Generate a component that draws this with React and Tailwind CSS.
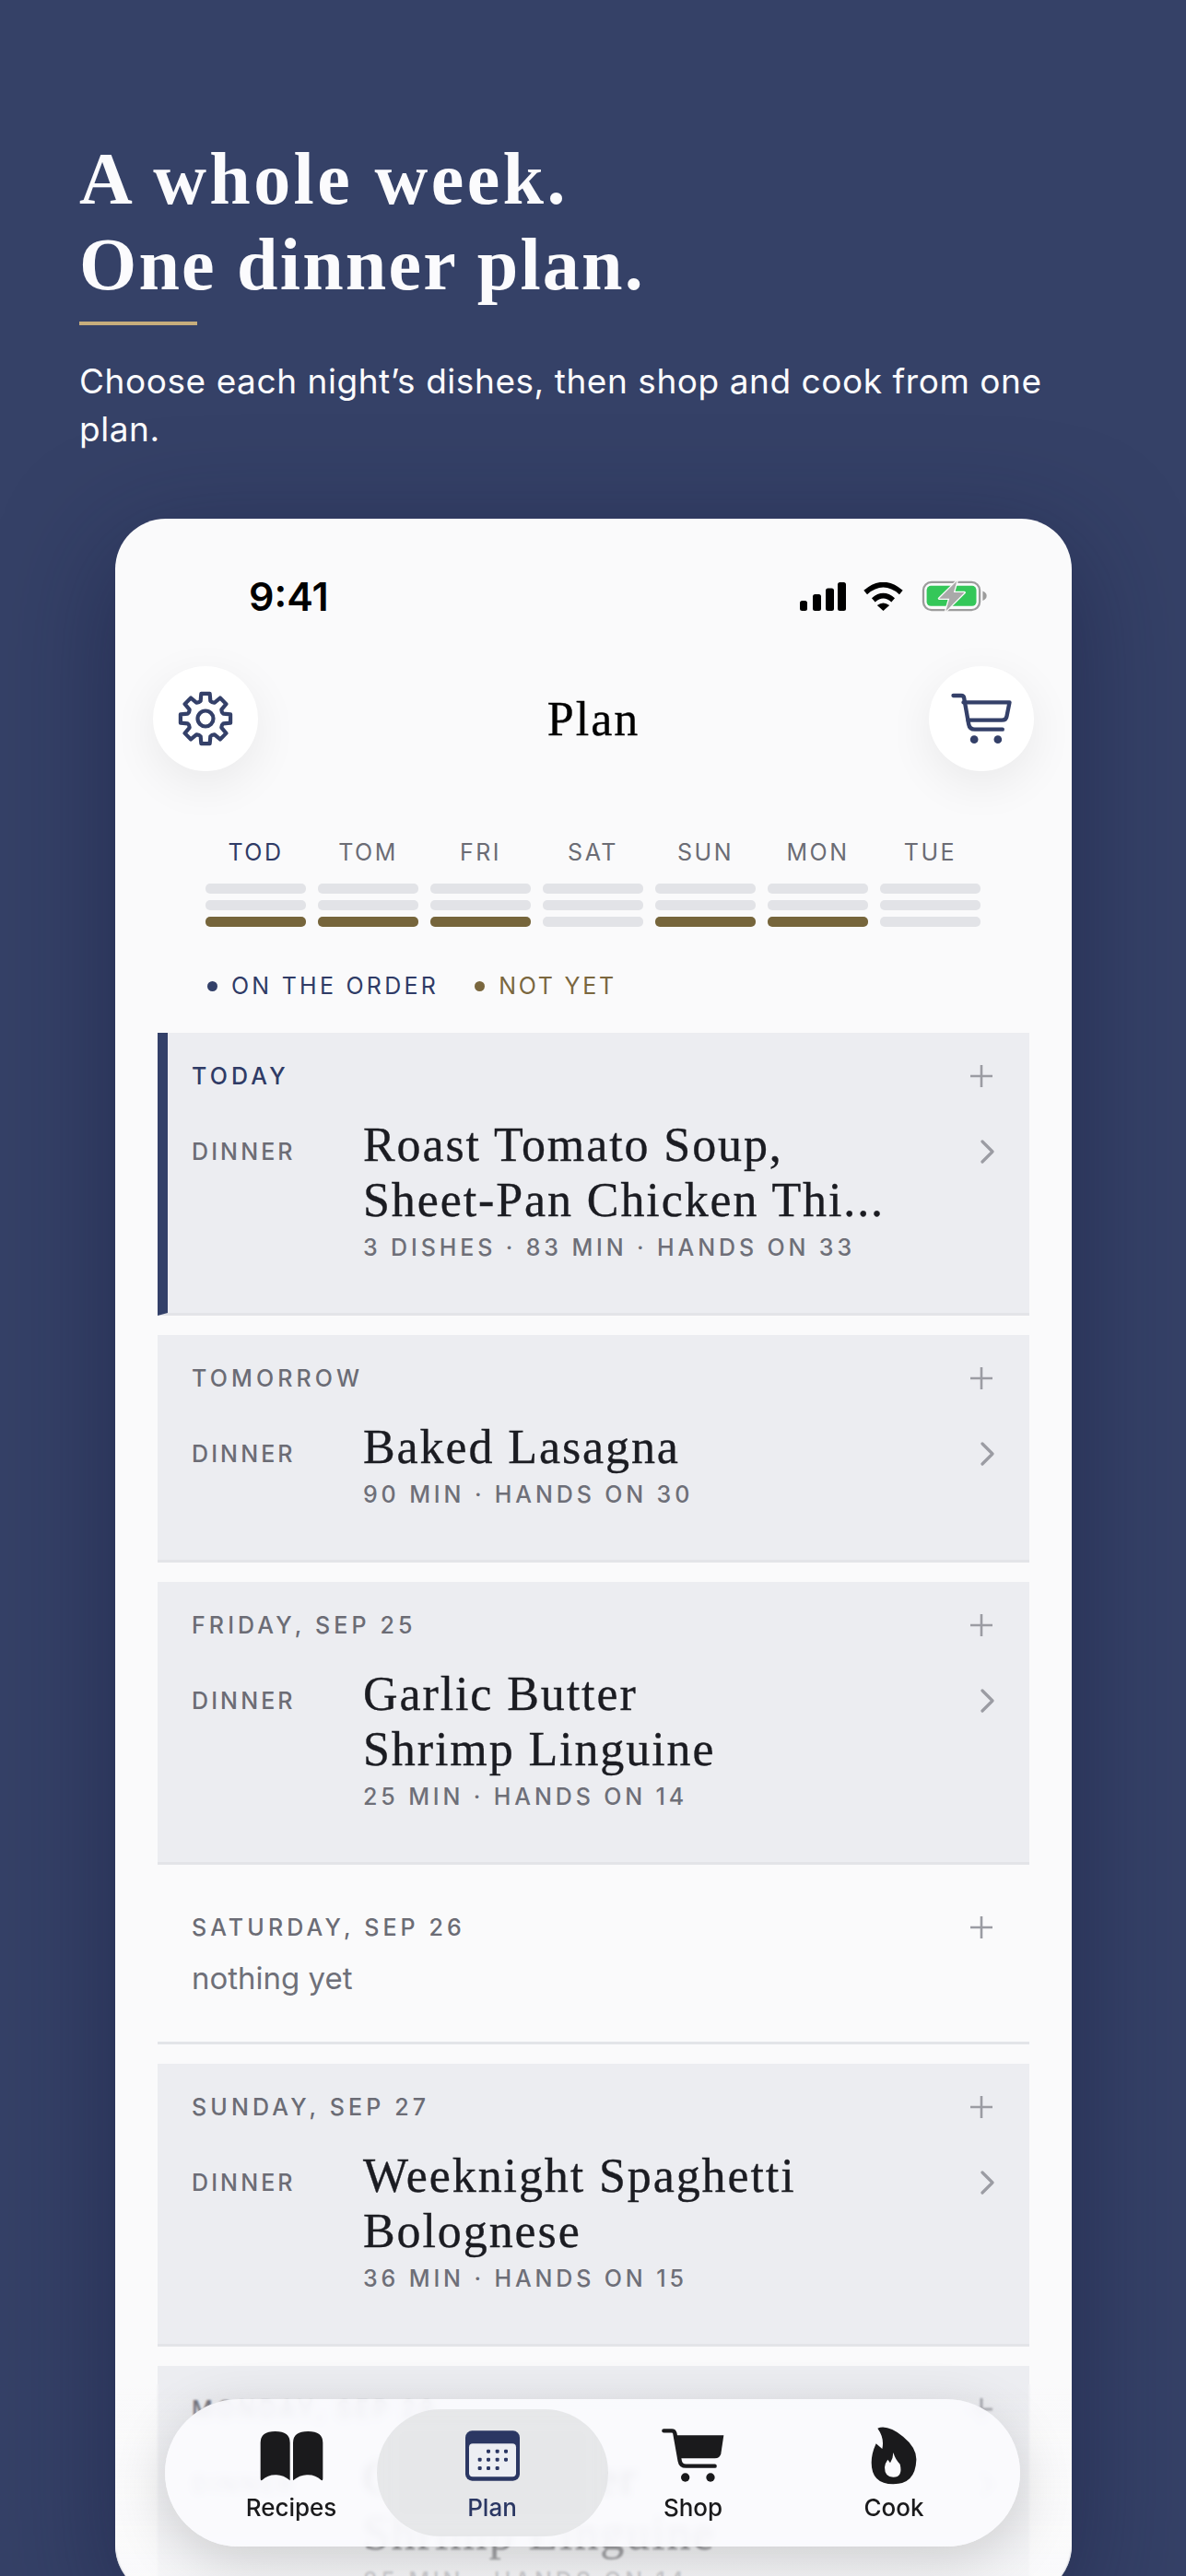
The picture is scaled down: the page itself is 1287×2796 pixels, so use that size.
import React from "react";

const serif = "font-['Liberation_Serif',serif] [-webkit-text-stroke:0.35px]";

function gearPath() {
  const cx = 30, cy = 30, n = 8;
  let d = "";
  for (let i = 0; i < n; i++) {
    const a = (i * 2 * Math.PI) / n - Math.PI / 2;
    const p = (r, da) => `${(cx + r * Math.cos(a + da)).toFixed(2)} ${(cy + r * Math.sin(a + da)).toFixed(2)}`;
    d += `${i === 0 ? "M" : "L"}${p(20, -0.27)} L${p(27.5, -0.17)} L${p(27.5, 0.17)} L${p(20, 0.27)} `;
    d += `Q${p(18.5, Math.PI / 8)} ${p(20, Math.PI / 4 - 0.27)} `;
  }
  return d + "Z";
}

const Gear = () => (
  <svg width="60" height="60" viewBox="0 0 60 60" fill="none" stroke="#344069" strokeWidth="4.2" strokeLinejoin="round">
    <path d={gearPath()} />
    <circle cx="30" cy="30" r="8.5" />
  </svg>
);

const HeaderCart = () => (
  <svg width="67" height="60" viewBox="570 450 200 180" fill="none" stroke="#344069" strokeWidth="13" strokeLinecap="round" strokeLinejoin="round">
    <path d="M580 465H606Q614 465 615 473L630 558Q633 575 650 575H740" />
    <path d="M613 487H763L754 532Q752 545 738 545H628" />
    <circle cx="648" cy="608" r="13" fill="#344069" stroke="none" />
    <circle cx="725" cy="608" r="13" fill="#344069" stroke="none" />
  </svg>
);

const Signal = () => (
  <svg width="50" height="31" viewBox="0 0 50 31" fill="#000">
    <rect x="0" y="20" width="8" height="11" rx="2.5" />
    <rect x="14" y="13" width="9" height="18" rx="2.5" />
    <rect x="28" y="6.5" width="9" height="24.5" rx="2.5" />
    <rect x="41" y="0" width="9" height="31" rx="2.5" />
  </svg>
);

const Wifi = () => (
  <svg width="43" height="31" viewBox="295 95 128 93" fill="none" stroke="#000" strokeWidth="17">
    <path d="M301 128Q359 78 417 128" />
    <path d="M327 153Q359 125 391 153" />
    <path d="M339 170Q359 155 379 170L359 188Z" fill="#000" stroke="none" />
  </svg>
);

const Battery = () => (
  <svg width="71" height="36" viewBox="480 88 216 108" fill="none">
    <rect x="486" y="96" width="186" height="92" rx="27" stroke="#9c9c9c" strokeWidth="7" />
    <rect x="497" y="108" width="164" height="67" rx="14" fill="#34c759" />
    <path d="M682 125Q695 130 695 141Q695 152 682 157Z" fill="#9c9c9c" />
    <path d="M597 92L538 150H572L560 192L622 130H586Z" fill="#a9a9a9" stroke="#fafafa" strokeWidth="8" paintOrder="stroke" strokeLinejoin="round" />
  </svg>
);

const Plus = () => (
  <svg width="24" height="24" viewBox="0 0 24 24" fill="none" stroke="#9b9ca3" strokeWidth="2.6">
    <path d="M12 0V24M0 12H24" />
  </svg>
);

const Chevron = () => (
  <svg width="15" height="26" viewBox="0 0 15 26" fill="none" stroke="#9b9ca3" strokeWidth="3.2" strokeLinecap="round" strokeLinejoin="round">
    <path d="M2 2L13 13L2 24" />
  </svg>
);

const Book = () => (
  <svg width="69" height="55" viewBox="545 235 207 165" fill="#1a1a1c">
    <path d="M547 275Q547 238 595 238Q643 238 643 275V398Q620 378 595 380Q570 380 552 397Q547 400 547 392Z" />
    <path d="M750 275Q750 238 702 238Q653 238 653 275V398Q677 378 702 380Q727 380 745 397Q750 400 750 392Z" />
  </svg>
);

const Calendar = () => (
  <svg width="59" height="55" viewBox="738 40 177 163">
    <rect x="738" y="40" width="177" height="163" rx="22" fill="#2b3763" />
    <rect x="750" y="82" width="153" height="108" rx="12" fill="#eceef3" />
    <g fill="#2b3763">
      {[[813, 107], [842, 107], [870, 107], [785, 134], [813, 134], [842, 134], [870, 134], [785, 162], [813, 162], [842, 162]].map(([x, y]) => (
        <rect key={`${x}-${y}`} x={x - 6} y={y - 6} width="12" height="12" rx="3.5" />
      ))}
    </g>
  </svg>
);

const NavCart = () => (
  <svg width="70" height="60" viewBox="50 40 210 180">
    <path d="M60 50H86Q94 50 96 58L112 148Q115 165 132 165H226" fill="none" stroke="#1a1a1c" strokeWidth="13" strokeLinecap="round" strokeLinejoin="round" />
    <path d="M102 65H255L246 125Q243 140 226 140H114Z" fill="#1a1a1c" />
    <circle cx="130" cy="202" r="14" fill="#1a1a1c" />
    <circle cx="212" cy="202" r="14" fill="#1a1a1c" />
  </svg>
);

const Flame = () => (
  <svg width="50" height="64" viewBox="735 20 150 192">
    <path d="M757 28Q790 15 840 55Q885 92 883 132Q880 210 808 210Q737 210 737 140Q737 110 752 78L772 95Q780 60 757 28Z" fill="#1a1a1c" />
    <path d="M808 107Q815 130 830 145Q840 187 808 187Q780 187 780 155Q782 140 790 130L798 141Q808 125 808 107Z" fill="#fbfbfe" />
  </svg>
);

const days = [
  ["TOD", true, true],
  ["TOM", false, true],
  ["FRI", false, true],
  ["SAT", false, false],
  ["SUN", false, true],
  ["MON", false, true],
  ["TUE", false, false],
];

const labelCls = "text-[25px] leading-[30px] font-medium tracking-[0.165em]";

function Row({ label, lines, meta, accent, empty }) {
  return (
    <div
      className={`border-b-[3px] border-[#e3e4e8] pr-[40px] ${accent ? "border-l-[11px] border-l-[#334069] pl-[26px]" : "pl-[37px]"} ${empty ? "pb-[47px]" : "bg-[#ecedf1] pb-[56px]"} pt-[32px]`}
    >
      <div className="flex items-center justify-between">
        <div className={`${labelCls} ${accent ? "text-[#2f3b66]" : "text-[#6b6c75]"}`}>{label}</div>
        <Plus />
      </div>
      {empty ? (
        <div className="mt-[18px] text-[33px] leading-[44px] text-[#6f7079]">nothing yet</div>
      ) : (
        <div className="mt-[30px] flex items-start">
          <div className="mt-[22px] w-[186px] shrink-0 text-[25px] leading-[30px] font-medium tracking-[0.125em] text-[#6b6c75]">DINNER</div>
          <div className="flex-1">
            <div className={`${serif} text-[52px] leading-[60px] tracking-[1.9px] text-[#1b1c22]`}>
              {lines.map((l) => (
                <div key={l}>{l}</div>
              ))}
            </div>
            <div className="mt-[6px] text-[25px] leading-[30px] font-medium tracking-[0.155em] text-[#6e6f78]">{meta}</div>
          </div>
          <div className="mt-[24px] -mr-[2px]">
            <Chevron />
          </div>
        </div>
      )}
    </div>
  );
}

const tabs = [
  ["Recipes", <Book key="b" />, "text-[#1a1a1c]"],
  ["Plan", <Calendar key="c" />, "text-[#2b3763]"],
  ["Shop", <NavCart key="s" />, "text-[#1a1a1c]"],
  ["Cook", <Flame key="f" />, "text-[#1a1a1c]"],
];

export default function App() {
  return (
    <div className="h-[2796px] overflow-hidden bg-[#354167] font-['Inter',sans-serif]">
      <div className="px-[86px] pt-[148px]">
        <h1 className="font-['Liberation_Serif',serif] text-[80px] leading-[93px] font-bold text-[#fbfbfd]">
          <div className="tracking-[3.4px]">A whole week.</div>
          <div className="tracking-[2.2px]">One dinner plan.</div>
        </h1>
        <div className="mt-[15px] h-[4px] w-[128px] bg-[#c7ad7c]" />
        <p className="mt-[35px] text-[37px] leading-[52px] tracking-[0.55px] text-[#fbfbfd]">
          Choose each night’s dishes, then shop and cook from one plan.
        </p>
      </div>

      <div className="relative mt-[71px] ml-[125px] h-[2255px] w-[1038px] overflow-hidden rounded-[55px] bg-[#fafafb] shadow-[0_30px_120px_rgba(20,24,60,0.5)]">
        <div className="flex h-[160px] items-center justify-between pt-2 pr-[92px] pl-[145px]">
          <div className="text-[43px] leading-none font-semibold text-black">9:41</div>
          <div className="flex items-center gap-[19px]">
            <Signal />
            <div className="flex items-center gap-[20px]">
              <Wifi />
              <Battery />
            </div>
          </div>
        </div>

        <div className="flex items-center justify-between px-[41px]">
          <div className="flex h-[114px] w-[114px] items-center justify-center rounded-full bg-white shadow-[0_14px_50px_rgba(0,0,0,0.07)]">
            <Gear />
          </div>
          <div className={`${serif} pt-[2px] text-[52px] leading-[60px] tracking-[2px] text-black`}>Plan</div>
          <div className="flex h-[114px] w-[114px] items-center justify-center rounded-full bg-white shadow-[0_14px_50px_rgba(0,0,0,0.07)]">
            <HeaderCart />
          </div>
        </div>

        <div className="mt-[73px] ml-[98px] grid w-[841px] grid-cols-7 gap-x-[13px]">
          {days.map(([d, active, filled]) => (
            <div key={d}>
              <div className={`text-center text-[25px] leading-[30px] tracking-[0.1em] ${active ? "text-[#2f3b66]" : "text-[#6b6c75]"}`}>{d}</div>
              <div className="mt-[19px] flex flex-col gap-[7px]">
                <div className="h-[11px] rounded-[5px] bg-[#e2e3e7]" />
                <div className="h-[11px] rounded-[5px] bg-[#e2e3e7]" />
                <div className={`h-[11px] rounded-[5px] ${filled ? "bg-[#76653b]" : "bg-[#e2e3e7]"}`} />
              </div>
            </div>
          ))}
        </div>

        <div className="mt-[49px] ml-[100px] flex items-center text-[25px] leading-[30px]">
          <span className="mr-[15px] h-[11px] w-[11px] rounded-full bg-[#334069]" />
          <span className="tracking-[0.13em] text-[#2f3b66]">ON THE ORDER</span>
          <span className="mr-[15px] ml-[39px] h-[11px] w-[11px] rounded-full bg-[#7a673e]" />
          <span className="tracking-[0.11em] text-[#7a673e]">NOT YET</span>
        </div>

        <div className="mt-[36px] flex flex-col gap-[21px] px-[46px]">
          <Row accent label="TODAY" lines={["Roast Tomato Soup,", "Sheet-Pan Chicken Thi..."]} meta="3 DISHES · 83 MIN · HANDS ON 33" />
          <Row label="TOMORROW" lines={["Baked Lasagna"]} meta="90 MIN · HANDS ON 30" />
          <Row label="FRIDAY, SEP 25" lines={["Garlic Butter", "Shrimp Linguine"]} meta="25 MIN · HANDS ON 14" />
          <Row empty label="SATURDAY, SEP 26" />
          <Row label="SUNDAY, SEP 27" lines={["Weeknight Spaghetti", "Bolognese"]} meta="36 MIN · HANDS ON 15" />
          <Row label="MONDAY, SEP 28" lines={["Garlic Butter", "Shrimp Linguine"]} meta="25 MIN · HANDS ON 14" />
        </div>

        <div className="pointer-events-none absolute right-0 bottom-0 left-0 h-[230px] bg-gradient-to-b from-[#fafafb]/0 to-[#fafafb]/75 backdrop-blur-[1px]" />

        <div className="absolute top-[2041px] left-[54px] grid h-[160px] w-[928px] grid-cols-4 rounded-[80px] bg-[#fbfbfe]/90 px-[28px] shadow-[0_16px_60px_rgba(0,0,0,0.16)] backdrop-blur-[4px]">
          <div className="absolute top-[11px] left-[230px] h-[138px] w-[251px] rounded-[69px] bg-[#dedfe1]/70 backdrop-blur-md" />
          {tabs.map(([name, icon, color]) => (
            <div key={name} className="relative flex flex-col items-center pt-[28px]">
              <div className="flex h-[66px] items-center justify-center">{icon}</div>
              <div className={`mt-[9px] text-[26px] leading-[30px] font-medium ${color}`}>{name}</div>
            </div>
          ))}
        </div>
      </div>
    </div>
  );
}
